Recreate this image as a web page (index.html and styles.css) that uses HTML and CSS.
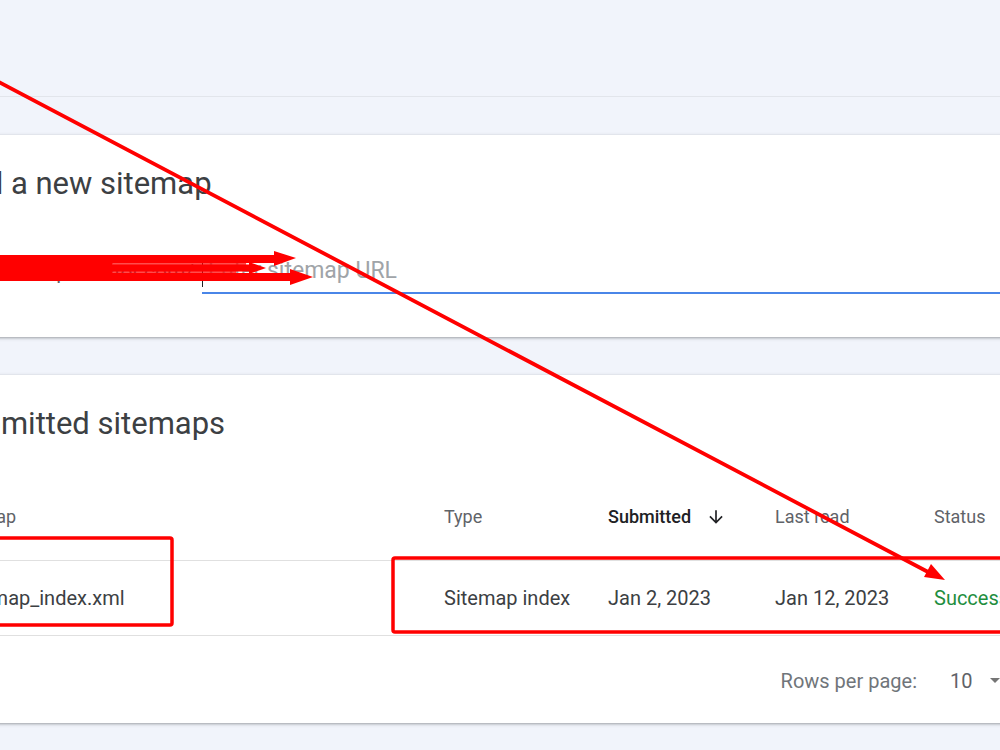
FILE: index.html
```html
<!DOCTYPE html>
<html lang="en">
<head>
  <meta charset="UTF-8" />
  <meta name="viewport" content="width=device-width, initial-scale=1.0"/>
  <title>Sitemaps</title>
  <link rel="stylesheet" href="styles.css">
</head>
<body>
  <div class="topbar"></div>

  <main class="content">
    <section class="card add-card">
      <h2 class="card-title">Add a new sitemap</h2>
      <div class="url-row">
        <span class="url-prefix">https://wapedoctor.com/</span>
        <div class="url-field">
          <span class="caret"></span>
          <input type="text" placeholder="Enter sitemap URL">
        </div>
      </div>
    </section>

    <section class="card list-card">
      <h2 class="card-title">Submitted sitemaps</h2>
      <div class="table">
        <div class="row head">
          <div>Sitemap</div>
          <div>Type</div>
          <div class="sorted">Submitted
            <svg viewBox="0 0 24 24" width="20" height="20"><path d="M20 12l-1.41-1.41L13 16.17V4h-2v12.17l-5.58-5.59L4 12l8 8 8-8z"/></svg>
          </div>
          <div>Last read</div>
          <div>Status</div>
          <div>Discovered pages</div>
        </div>
        <div class="row">
          <div>/sitemap_index.xml</div>
          <div>Sitemap index</div>
          <div>Jan 2, 2023</div>
          <div>Jan 12, 2023</div>
          <div class="ok">Success</div>
          <div>126</div>
        </div>
      </div>
      <div class="pager">
        <span class="pager-label">Rows per page:</span>
        <span class="pager-select">10
          <svg viewBox="0 0 10 5" width="10" height="5"><path d="M0 0l5 5 5-5z"/></svg>
        </span>
        <span class="pager-range">1-1 of 1</span>
        <span class="pager-btn">&lsaquo;</span>
        <span class="pager-btn">&rsaquo;</span>
      </div>
    </section>
  </main>

  <!-- red annotations drawn over the screenshot -->
  <svg class="marks" viewBox="0 0 1000 750" width="1000" height="750">
    <g stroke="#ff0000" fill="none" stroke-linecap="round">
      <line x1="-5" y1="80" x2="930" y2="573" stroke-width="3.8"/>
      <rect x="-10" y="538" width="182" height="87" rx="2" stroke-width="3.5"/>
      <rect x="393" y="558" width="630" height="74" rx="2" stroke-width="3.5"/>
      <line x1="-5" y1="259" x2="278" y2="259" stroke-width="8"/>
      <line x1="-5" y1="268" x2="252" y2="268" stroke-width="7"/>
      <line x1="-5" y1="277" x2="294" y2="277" stroke-width="8"/>
      <line x1="0" y1="263" x2="110" y2="263" stroke-width="5"/>
      <line x1="0" y1="273" x2="110" y2="273" stroke-width="5"/>
      <line x1="100" y1="264" x2="245" y2="264" stroke-width="2.5" opacity="0.7"/>
      <line x1="100" y1="272" x2="235" y2="272" stroke-width="2.5" opacity="0.7"/>
    </g>
    <g fill="#ff0000">
      <polygon points="945,580 924,577 931,564"/>
      <polygon points="296,258 274,251 274,266"/>
      <polygon points="266,268 249,262 249,274"/>
      <polygon points="313,277 290,269 290,285"/>
    </g>
  </svg>
</body>
</html>
```

FILE: styles.css
```css
:root {
  --fundo: #f1f4fb;
  --borda: #e0e0e0;
  --texto: #3c4043;
  --texto-fraco: #5f6368;
  --azul: #4a86e8;
  --verde: #1e8e3e;
}

* {
  margin: 0;
  padding: 0;
  box-sizing: border-box;
}

html, body {
  width: 1000px;
  height: 750px;
  overflow: hidden;
}

body {
  position: relative;
  font-family: Roboto, 'Noto Sans', sans-serif;
  background-color: var(--fundo);
  color: var(--texto);
}

.topbar {
  height: 97px;
  border-bottom: 1px solid #e2e5eb;
}

.content {
  margin-left: -74px;
  width: 1300px;
  padding-top: 38px;
  display: flex;
  flex-direction: column;
  gap: 38px;
}

.card {
  background-color: #fff;
  padding: 0 24px;
  box-shadow: 0 1px 2px rgba(60, 64, 67, 0.3), 0 1px 3px 1px rgba(60, 64, 67, 0.15);
}

.card-title {
  font-size: 31px;
  font-weight: 400;
  line-height: 40px;
  padding-top: 29px;
  margin-left: -2px;
  color: var(--texto);
}

.add-card {
  height: 202px;
}

.url-row {
  display: flex;
  align-items: flex-end;
  margin-top: 51px;
}

.url-prefix {
  width: 252px;
  padding-right: 8px;
  text-align: right;
  font-size: 21px;
  line-height: 30px;
  padding-bottom: 7px;
  color: var(--texto-fraco);
  white-space: nowrap;
}

.url-field {
  flex: 1;
  display: flex;
  align-items: center;
  border-bottom: 2px solid var(--azul);
  padding-bottom: 5px;
}

.caret {
  width: 1px;
  height: 25px;
  background-color: #202124;
  margin-top: 7px;
  margin-right: -1px;
}

.url-field input {
  flex: 1;
  border: none;
  outline: none;
  background: transparent;
  font-family: Roboto, sans-serif;
  font-size: 23px;
  line-height: 30px;
  height: 30px;
  padding-left: 6px;
  color: var(--texto);
}

.url-field input::placeholder {
  color: #a0a4a8;
}

.list-card {
  height: 348px;
}

.table {
  margin-top: 61px;
}

.row {
  display: grid;
  grid-template-columns: 494px 164px 167px 159px 150px 1fr;
  align-items: center;
  height: 75px;
  font-size: 20px;
  border-bottom: 1px solid var(--borda);
  white-space: nowrap;
}

.row.head {
  align-items: start;
  height: 56px;
  font-size: 18px;
  line-height: 24px;
  color: var(--texto-fraco);
}

.row .sorted {
  display: flex;
  align-items: center;
  gap: 15px;
  color: #202124;
  font-weight: 500;
}

.sorted svg {
  fill: #202124;
}

.row .ok {
  color: var(--verde);
}

.pager {
  display: flex;
  justify-content: flex-end;
  align-items: center;
  height: 86px;
  padding-top: 3px;
  font-size: 20px;
  color: #70757a;
}

.pager-select {
  display: flex;
  align-items: center;
  gap: 18px;
  margin-left: 33px;
  color: #5f6368;
}

.pager-select svg {
  fill: #757575;
}

.pager-range {
  margin-left: 40px;
  margin-right: 14px;
}

.pager-btn {
  width: 40px;
  text-align: center;
  font-size: 28px;
}

.marks {
  position: absolute;
  top: 0;
  left: 0;
  pointer-events: none;
}
```
